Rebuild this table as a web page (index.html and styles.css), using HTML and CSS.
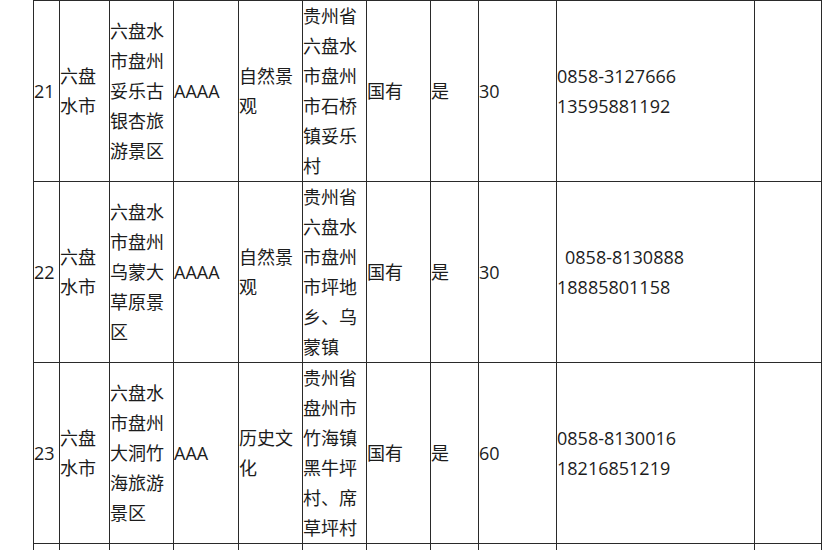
FILE: index.html
```html
<!DOCTYPE html>
<html lang="zh-CN">
<head>
<meta charset="utf-8">
<title>景区名录</title>
<link rel="stylesheet" href="styles.css">
</head>
<body>
<table class="sites">
  <colgroup>
    <col class="c-no"><col class="c-city"><col class="c-name"><col class="c-level"><col class="c-type"><col class="c-addr"><col class="c-own"><col class="c-yes"><col class="c-num"><col class="c-tel"><col class="c-note">
  </colgroup>
  <tbody>
    <tr>
      <td>21</td>
      <td>六盘水市</td>
      <td>六盘水市盘州妥乐古银杏旅游景区</td>
      <td>AAAA</td>
      <td>自然景观</td>
      <td>贵州省六盘水市盘州市石桥镇妥乐村</td>
      <td>国有</td>
      <td>是</td>
      <td>30</td>
      <td>0858-3127666<br>13595881192</td>
      <td></td>
    </tr>
    <tr>
      <td>22</td>
      <td>六盘水市</td>
      <td>六盘水市盘州乌蒙大草原景区</td>
      <td>AAAA</td>
      <td>自然景观</td>
      <td>贵州省六盘水市盘州市坪地乡、乌蒙镇</td>
      <td>国有</td>
      <td>是</td>
      <td>30</td>
      <td><span class="indent">0858-8130888</span><br>18885801158</td>
      <td></td>
    </tr>
    <tr>
      <td>23</td>
      <td>六盘水市</td>
      <td>六盘水市盘州大洞竹海旅游景区</td>
      <td>AAA</td>
      <td>历史文化</td>
      <td>贵州省盘州市竹海镇黑牛坪村、席草坪村</td>
      <td>国有</td>
      <td>是</td>
      <td>60</td>
      <td>0858-8130016<br>18216851219</td>
      <td></td>
    </tr>
    <tr class="next">
      <td></td><td></td><td></td><td></td><td></td><td></td><td></td><td></td><td></td><td></td><td></td>
    </tr>
  </tbody>
</table>
</body>
</html>
```
FILE: styles.css
```css
html, body {
  margin: 0;
  padding: 0;
  background: #ffffff;
  height: 550px;
  overflow: hidden;
}

.sites {
  margin-left: 33px;
  border-collapse: collapse;
  table-layout: fixed;
  width: 788px;
  font-family: "Open Sans", "Noto Sans CJK SC", sans-serif;
  font-size: 18px;
  line-height: 30px;
  color: #1c1c1c;
}

.sites td {
  border: 1px solid #2a2a2a;
  padding: 0;
  vertical-align: middle;
  text-align: left;
  word-break: break-all;
}

.indent {
  padding-left: 8px;
}

.c-no { width: 26px; }
.c-city { width: 50px; }
.c-name { width: 64px; }
.c-level { width: 65px; }
.c-type { width: 64px; }
.c-addr { width: 64px; }
.c-own { width: 64px; }
.c-yes { width: 48px; }
.c-num { width: 78px; }
.c-tel { width: 198px; }
.c-note { width: 67px; }

.next td {
  height: 7px;
  line-height: 7px;
}
```
